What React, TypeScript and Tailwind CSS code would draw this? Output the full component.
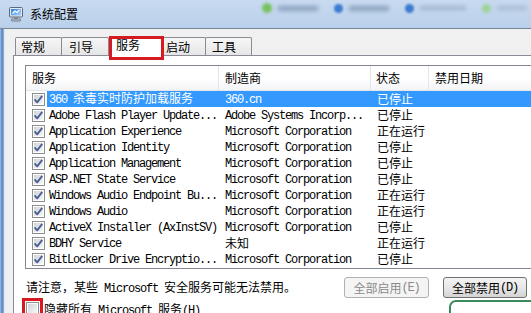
import React from 'react';

const MONO = "font-['Liberation_Mono',monospace] tracking-[-1.2px] whitespace-pre";
const CJK = "font-['Noto_Sans_CJK_SC',sans-serif] whitespace-pre";

// splits a label into ascii / cjk runs so each gets its own font
function Mixed({ text }: { text: string }) {
  const parts = text.match(/[\x00-\x7f]+|[^\x00-\x7f]+/g) ?? [];
  return (
    <>
      {parts.map((p, i) => (
        <span key={i} className={/[\x00-\x7f]/.test(p[0]) ? MONO : CJK}>
          {p}
        </span>
      ))}
    </>
  );
}

function CheckBox({ checked }: { checked: boolean }) {
  return (
    <svg width="13" height="13" viewBox="0 0 13 13" className="shrink-0">
      <defs>
        <linearGradient id="cbg" x1="0" y1="0" x2="1" y2="1">
          <stop offset="0" stopColor="#cfd3d8" />
          <stop offset="1" stopColor="#f7f7f7" />
        </linearGradient>
      </defs>
      <rect x="0.5" y="0.5" width="12" height="12" fill="#fff" stroke="#8e8f8f" />
      <rect x="2" y="2" width="9" height="9" fill="url(#cbg)" />
      {checked && (
        <path d="M2.6 6.4 L5.2 9.3 L10.2 2.8" fill="none" stroke="#4a5f97" strokeWidth="1.9" strokeLinejoin="round" />
      )}
    </svg>
  );
}

const rows = [
  { name: '360 杀毒实时防护加载服务', maker: '360.cn', status: '已停止', selected: true },
  { name: 'Adobe Flash Player Update...', maker: 'Adobe Systems Incorp...', status: '已停止' },
  { name: 'Application Experience', maker: 'Microsoft Corporation', status: '正在运行' },
  { name: 'Application Identity', maker: 'Microsoft Corporation', status: '已停止' },
  { name: 'Application Management', maker: 'Microsoft Corporation', status: '已停止' },
  { name: 'ASP.NET State Service', maker: 'Microsoft Corporation', status: '已停止' },
  { name: 'Windows Audio Endpoint Bu...', maker: 'Microsoft Corporation', status: '正在运行' },
  { name: 'Windows Audio', maker: 'Microsoft Corporation', status: '正在运行' },
  { name: 'ActiveX Installer (AxInstSV)', maker: 'Microsoft Corporation', status: '已停止' },
  { name: 'BDHY Service', maker: '未知', status: '正在运行' },
  { name: 'BitLocker Drive Encryptio...', maker: 'Microsoft Corporation', status: '已停止' },
  { name: 'Block Level Backup Engine...', maker: 'Microsoft Corporation', status: '已停止' },
];

function TitleIcon() {
  return (
    <svg width="16" height="16" viewBox="0 0 16 16">
      <defs>
        <linearGradient id="scr" x1="0" y1="0" x2="1" y2="1">
          <stop offset="0" stopColor="#2f7fd6" />
          <stop offset="1" stopColor="#a9d6ff" />
        </linearGradient>
      </defs>
      <rect x="1.5" y="1.5" width="13" height="9.5" rx="1" fill="#e4e9ef" stroke="#5d6876" />
      <rect x="3" y="3" width="10" height="6.5" fill="url(#scr)" />
      <path d="M4.5 7.5 L7 5 L9 6.5 L11.5 4" fill="none" stroke="#fff" strokeWidth="1.1" />
      <rect x="6.5" y="11" width="3" height="2" fill="#7c8693" />
      <rect x="3.5" y="13" width="9" height="2" rx="0.5" fill="#c3cad3" stroke="#5d6876" strokeWidth="0.8" />
    </svg>
  );
}

export default function App() {
  return (
    <div className="w-[531px] h-[313px] overflow-hidden bg-white text-[12px] text-black">
      <div className="w-[560px] h-[340px] flex flex-col">
        {/* title bar */}
        <div className="h-[29px] shrink-0 flex bg-linear-to-b from-[#c8daf0] to-[#bad0ea] border-b border-[#7b8797]">
          <div className="w-[262px] shrink-0 flex items-center pl-[8px] gap-[6px]">
            <TitleIcon />
            <span className={CJK + ' leading-4 text-[12px]'}>系统配置</span>
          </div>
          <div className="flex items-center mt-[3px] self-start h-[10px]">
            <div className="w-[10px] h-[10px] rounded-full bg-[#77c15f] blur-[1.5px]" />
            <div className="ml-[6px] w-[40px] h-[5px] bg-[#8aa2be] blur-[2px]" />
            <div className="ml-[16px] w-[9px] h-[9px] rounded-full bg-[#3b7bd0] blur-[1px]" />
            <div className="ml-[6px] w-[40px] h-[5px] bg-[#8aa2be] blur-[2px]" />
            <div className="ml-[16px] w-[9px] h-[9px] rounded-full bg-[#3b7bd0] blur-[1px]" />
            <div className="ml-[6px] w-[46px] h-[4px] bg-[#9fb4cc] blur-[2px]" />
            <div className="ml-[16px] w-[9px] h-[9px] rounded-full bg-[#9fd39a] blur-[1.5px]" />
            <div className="ml-[6px] w-[30px] h-[4px] bg-[#a6b9cf] blur-[2px]" />
          </div>
        </div>

        <div className="flex flex-1">
          {/* window frame */}
          <div className="w-[5px] shrink-0 bg-linear-to-r from-[#a8c4e6] via-[#4f82c2] to-[#9bb8dc] border-r border-[#dfe7f1]" />

          {/* client */}
          <div className="flex-1 flex flex-col bg-[#f0f0f0] pl-[8px]">
            {/* tabs */}
            <div className="flex items-end h-[26px] pl-[2px] pt-[7px]">
              <div className={CJK + ' h-[18px] w-[47px] border border-b-0 border-[#898c95] rounded-t-[2px] bg-linear-to-b from-[#f6f6f6] to-[#e6e6e6] pl-[5px] pt-[2px] leading-[14px]'}>常规</div>
              <div className={CJK + ' -ml-px h-[18px] w-[48px] border border-b-0 border-[#898c95] rounded-t-[2px] bg-linear-to-b from-[#f6f6f6] to-[#e6e6e6] pl-[7px] pt-[2px] leading-[14px]'}>引导</div>
              <div className={CJK + ' relative z-10 -mb-[5px] h-[24px] w-[55px] border-[3px] border-[#d71a21] bg-white pl-[4px] leading-[12px]'}>服务</div>
              <div className={CJK + ' -ml-[4px] h-[18px] w-[46px] border border-b-0 border-[#898c95] rounded-t-[2px] bg-linear-to-b from-[#f6f6f6] to-[#e6e6e6] pl-[5px] pt-[2px] leading-[14px]'}>启动</div>
              <div className={CJK + ' -ml-px h-[18px] w-[47px] border border-b-0 border-[#898c95] rounded-t-[2px] bg-linear-to-b from-[#f6f6f6] to-[#e6e6e6] pl-[6px] pt-[2px] leading-[14px]'}>工具</div>
            </div>

            {/* tab panel */}
            <div className="flex-1 bg-white border-t border-l border-[#898c95] pt-[9px] pl-[11px] pr-[11px] flex flex-col">
              {/* services list */}
              <div className="h-[204px] border border-[#828790] overflow-hidden flex flex-col">
                <div className="h-[25px] shrink-0 flex bg-linear-to-b from-white via-white to-[#f3f4f6] border-b border-[#e4e6ea]">
                  <div className={CJK + ' w-[193px] pl-[6px] flex items-center border-r border-[#e3e5e8]'}>服务</div>
                  <div className={CJK + ' w-[152px] pl-[6px] flex items-center border-r border-[#e3e5e8]'}>制造商</div>
                  <div className={CJK + ' w-[58px] pl-[5px] flex items-center border-r border-[#e3e5e8]'}>状态</div>
                  <div className={CJK + ' flex-1 pl-[6px] flex items-center'}>禁用日期</div>
                </div>
                {rows.map((r, i) => (
                  <div key={i} className="h-4 shrink-0 flex items-center">
                    <div className="w-[21px] shrink-0 flex pl-[6px]">
                      <CheckBox checked />
                    </div>
                    <div className={'flex-1 h-4 flex items-center leading-4 ' + (r.selected ? 'bg-[#3399ff] text-white' : '')}>
                      <div className="w-[172px] shrink-0 pl-[2px] overflow-hidden">
                        <Mixed text={r.name} />
                      </div>
                      <div className="w-[152px] shrink-0 pl-[6px] overflow-hidden">
                        <Mixed text={r.maker} />
                      </div>
                      <div className="w-[58px] shrink-0 pl-[6px]">
                        <Mixed text={r.status} />
                      </div>
                    </div>
                  </div>
                ))}
              </div>

              {/* note + buttons */}
              <div className="mt-[8px] h-[21px] flex items-center">
                <div className="w-[319px] shrink-0 pl-px leading-4">
                  <Mixed text="请注意，某些 Microsoft 安全服务可能无法禁用。" />
                </div>
                <div className="w-[85px] h-[21px] flex items-center justify-center border border-[#adb2b5] rounded-[3px] bg-[#f4f4f4] text-[#8a8a8a] leading-4">
                  <Mixed text="全部启用(E)" />
                </div>
                <div className="ml-[14px] w-[84px] h-[21px] flex items-center justify-center border border-[#707070] rounded-[3px] bg-linear-to-b from-[#f3f3f3] via-[#e8e8e8] to-[#d4d4d4] leading-4">
                  <Mixed text="全部禁用(D)" />
                </div>
              </div>

              {/* hide microsoft services */}
              <div className="flex items-start">
                <div className="w-[427px] shrink-0 -ml-[3px] flex items-start">
                  <div className="border-[3px] border-[#d71a21] p-px">
                    <CheckBox checked={false} />
                  </div>
                  <div className="pl-[1px] pt-[3px] leading-4">
                    <Mixed text="隐藏所有 Microsoft 服务(H)" />
                  </div>
                </div>
                <div className="mt-[2px] w-[100px] h-[30px] border-2 border-[#3b8a5c] rounded-[7px] bg-white" />
              </div>
            </div>
          </div>
        </div>
      </div>
    </div>
  );
}
